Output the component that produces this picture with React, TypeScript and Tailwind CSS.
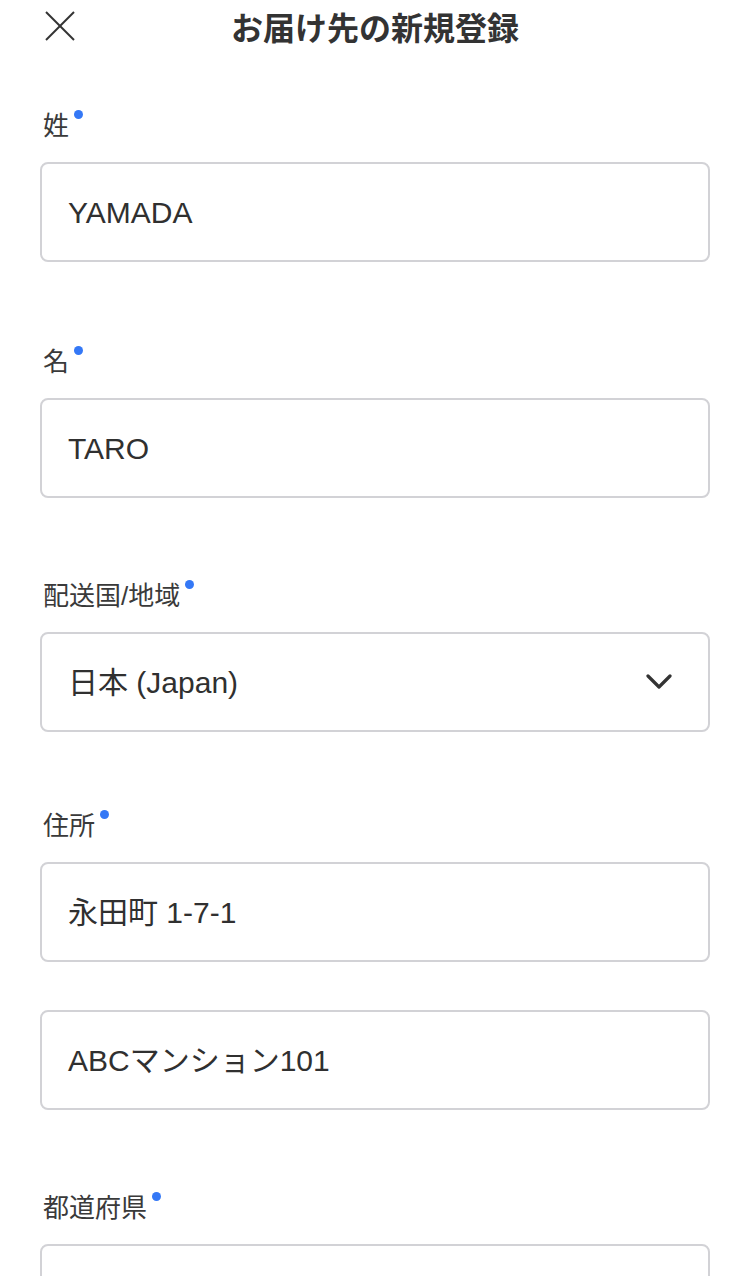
import React from 'react';

const Dot: React.FC = () => (
  <span className="ml-[5px] mt-[2px] inline-block h-[9px] w-[9px] rounded-full bg-[#3478f6]" />
);

const Label: React.FC<{ text: string }> = ({ text }) => (
  <div className="flex items-start h-[36px] mb-[18px] pl-[3px]">
    <span className="text-[26px] leading-[36px] text-[#3a3a3a]">{text}</span>
    <Dot />
  </div>
);

const Field: React.FC<{ value?: string; select?: boolean }> = ({ value, select }) => (
  <div className="flex h-[100px] items-center justify-between rounded-[8px] border-2 border-[#d2d2d6] bg-white pl-[26px] pr-[36px]">
    <span className="text-[30px] text-[#303030]">{value}</span>
    {select && (
      <svg width="26" height="16" viewBox="0 0 26 16" fill="none">
        <polyline points="2,2 13,13 24,2" stroke="#333" strokeWidth="3.2" strokeLinecap="round" strokeLinejoin="round" />
      </svg>
    )}
  </div>
);

const App: React.FC = () => {
  return (
    <div
      className="min-h-[1276px] w-[750px] bg-white"
      style={{ fontFamily: '"Liberation Sans", "Noto Sans CJK JP", sans-serif' }}
    >
      <div className="grid h-[52px] grid-cols-[1fr_auto_1fr] items-center px-[44px]">
        <button className="flex h-[32px] w-[32px] items-center">
          <svg width="32" height="32" viewBox="0 0 32 32" fill="none">
            <line x1="2" y1="2" x2="30" y2="30" stroke="#333" strokeWidth="2" />
            <line x1="30" y1="2" x2="2" y2="30" stroke="#333" strokeWidth="2" />
          </svg>
        </button>
        <h1
          className="text-[32px] font-bold leading-[40px] text-[#333]"
          style={{ fontFamily: '"Noto Sans CJK JP", sans-serif' }}
        >
          お届け先の新規登録
        </h1>
        <div />
      </div>

      <div className="px-[40px] pt-[56px]">
        <Label text="姓" />
        <Field value="YAMADA" />

        <div className="mt-[82px]">
          <Label text="名" />
          <Field value="TARO" />
        </div>

        <div className="mt-[80px]">
          <Label text="配送国/地域" />
          <Field value="日本 (Japan)" select />
        </div>

        <div className="mt-[76px]">
          <Label text="住所" />
          <Field value="永田町 1-7-1" />
          <div className="mt-[48px]">
            <Field value="ABCマンション101" />
          </div>
        </div>

        <div className="mt-[80px]">
          <Label text="都道府県" />
          <Field value="" />
        </div>
      </div>
    </div>
  );
};

export default App;
